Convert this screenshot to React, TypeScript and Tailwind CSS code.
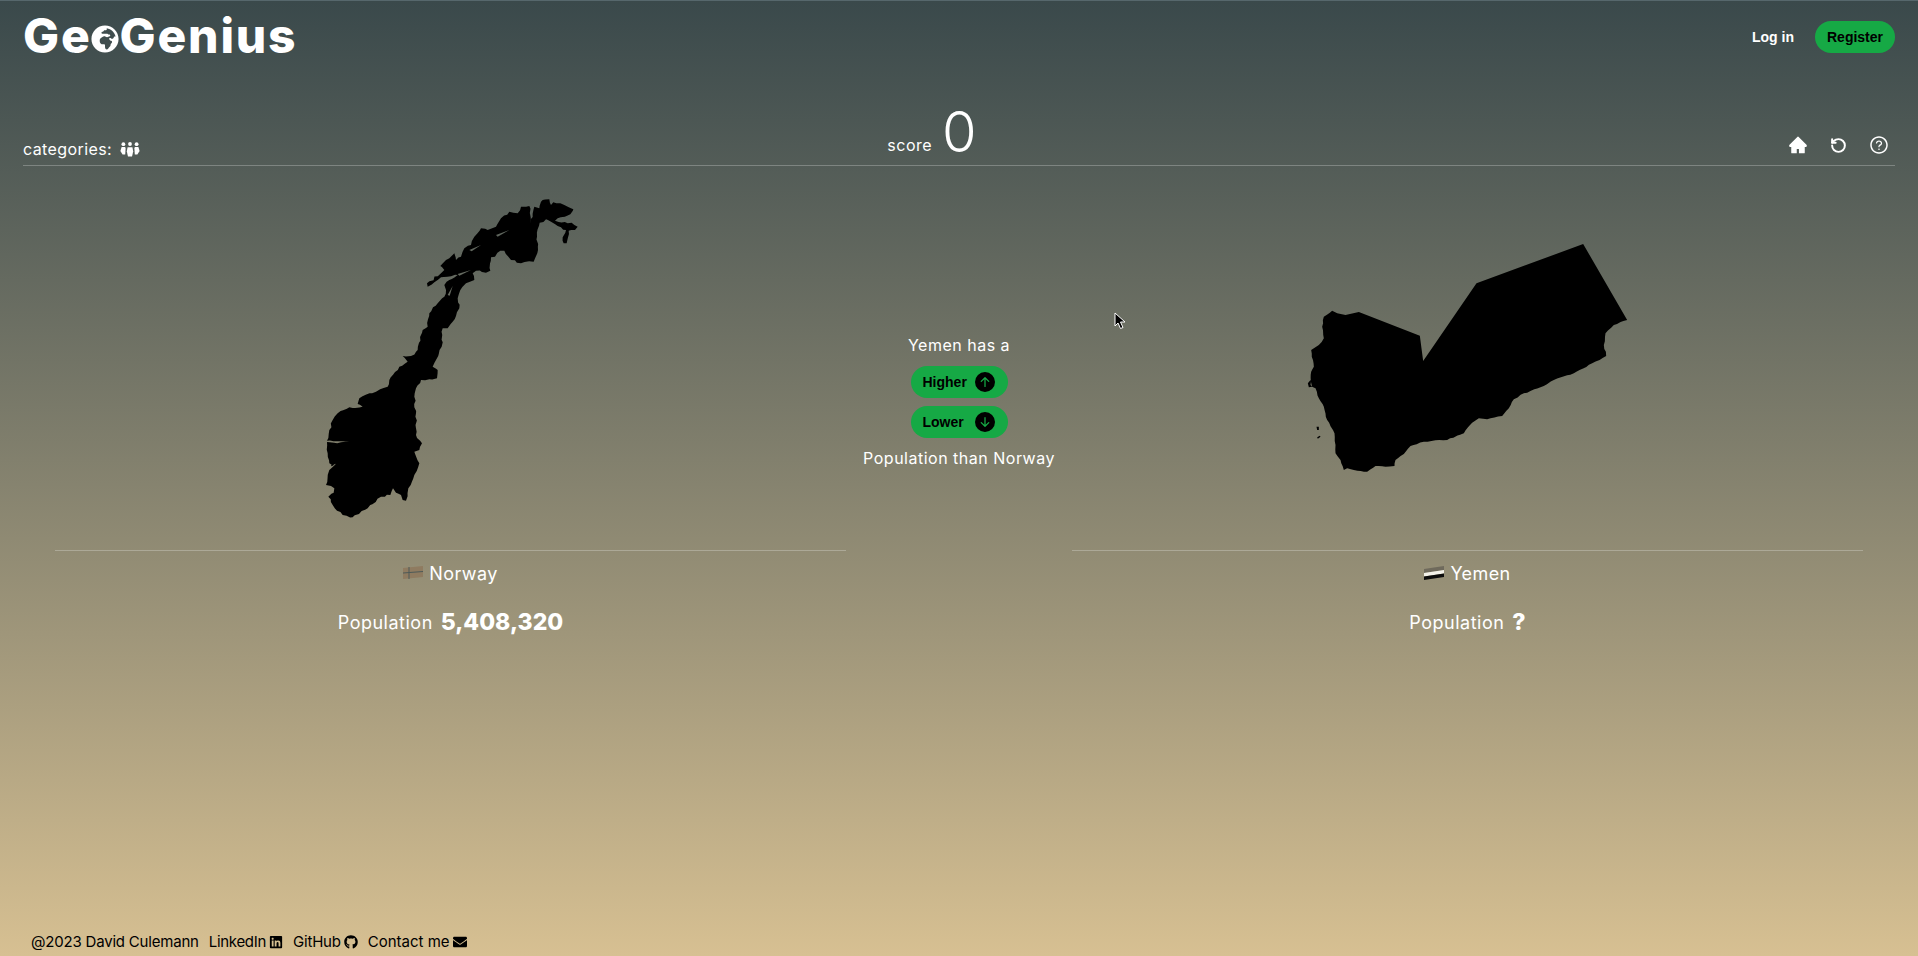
import { BsArrowDownCircleFill, BsArrowUpCircleFill } from "react-icons/bs";
import { AiFillHome, AiOutlineQuestionCircle } from "react-icons/ai";
import { FaEnvelope, FaGithub, FaGlobeAfrica, FaLinkedin } from "react-icons/fa";
import { RotateCcw } from "lucide-react";

// adds small noise along a line so it reads as a coastline
function roughen(points: number[][], amp: number) {
  let out = "";
  let n = 0;
  for (let i = 0; i < points.length - 1; i++) {
    const [x1, y1] = points[i];
    const [x2, y2] = points[i + 1];
    const steps = Math.max(1, Math.round(Math.hypot(x2 - x1, y2 - y1) / 11));
    for (let s = 0; s < steps; s++) {
      const t = s / steps;
      const a = Math.sin(++n * 12.9898) * 43758.5453;
      const b = Math.sin(n * 78.233) * 24634.6345;
      const dx = s === 0 ? 0 : (a - Math.floor(a) - 0.5) * 2 * amp;
      const dy = s === 0 ? 0 : (b - Math.floor(b) - 0.5) * 2 * amp;
      out += `L${(x1 + (x2 - x1) * t + dx).toFixed(1)},${(y1 + (y2 - y1) * t + dy).toFixed(1)} `;
    }
  }
  return out;
}

const NORWAY_COAST = [
  [725, 60], [745, 58], [750, 75], [757, 67], [790, 75], [817, 88], [808, 103], [770, 115], [762, 122], [800, 130], [812, 128], [830, 140], [822, 150], [803, 152], [797, 190], [788, 190], [785, 172], [795, 150], [770, 138], [750, 125], [735, 118], [716, 128], [708, 170], [711, 210], [698, 245], [660, 250], [630, 240], [610, 212], [598, 212], [582, 230], [570, 232], [568, 272], [555, 278], [525, 272], [515, 280], [520, 300], [495, 310], [478, 330], [470, 355], [475, 385], [455, 425], [440, 445], [425, 445], [422, 500], [405, 540], [395, 560], [410, 570], [408, 595], [385, 598], [360, 600], [345, 625], [340, 650], [345, 700], [345, 765], [363, 790], [355, 810], [340, 815], [355, 850], [340, 885], [322, 925], [315, 962], [305, 960], [300, 945], [285, 938], [276, 925], [268, 945], [240, 950], [200, 985], [155, 1012], [125, 1005], [95, 975], [82, 950], [98, 938], [100, 925], [90, 918], [75, 915], [85, 870], [104, 853], [85, 850], [80, 820], [78, 786], [120, 787], [145, 786], [120, 784], [78, 782], [85, 750], [95, 720], [110, 700], [145, 682], [185, 680], [170, 672], [175, 655], [225, 635], [260, 620], [265, 600], [295, 560], [320, 545], [305, 528], [330, 528], [345, 515], [350, 510], [365, 450], [380, 440], [385, 400], [410, 370], [430, 350], [435, 330], [430, 315], [445, 300], [470, 285], [420, 292], [380, 320], [378, 310], [420, 280], [430, 270], [418, 258], [435, 240], [445, 235], [460, 220], [465, 240], [480, 230], [490, 205], [510, 195], [520, 170], [540, 145], [560, 150], [585, 140], [600, 115], [625, 95], [650, 100], [660, 80], [685, 78], [688, 130], [700, 80], [715, 85], [720, 65], [725, 60],
];

// small inlets inside the northern part, cut out by evenodd
const NORWAY_INLETS =
  "M505,210 L540,195 L512,214 Z M470,282 L510,270 L475,287 Z M440,345 L455,318 L446,347 Z M585,165 L625,150 L590,170 Z M90,855 L105,851 L92,859 Z";

const NORWAY = "M" + roughen(NORWAY_COAST, 3).slice(1) + "Z " + NORWAY_INLETS;

const YEMEN_COAST = [
  [1010, 270], [970, 285], [945, 310], [940, 345], [947, 378], [905, 400], [850, 430], [790, 450], [750, 472], [700, 490], [670, 508], [655, 535], [635, 558], [590, 568], [565, 565], [545, 578], [520, 610], [470, 630], [400, 635], [360, 648], [340, 672], [315, 690], [312, 708], [285, 710], [255, 708], [230, 725], [190, 720], [170, 715], [160, 720], [150, 690], [135, 670], [132, 610], [110, 570], [100, 530], [85, 505], [75, 475], [60, 465], [62, 425], [70, 410], [62, 360], [85, 345], [100, 325], [95, 290], [100, 260], [125, 242],
];

const YEMEN =
  "M125,242 L140,250 L165,255 L205,246 L388,317 L398,393 L558,160 L878,42 " +
  roughen(YEMEN_COAST, 1.5) +
  "Z M52,460 L60,450 L65,470 L55,472 Z M78,590 L85,590 L85,600 L80,600 Z M80,622 L88,617 L90,620 L82,626 Z";

function CountryShape({ d, viewBox }: { d: string; viewBox: string }) {
  return (
    <svg viewBox={viewBox} className="h-[350px] w-[350px]">
      <path d={d} fill="#000" fillRule="evenodd" />
    </svg>
  );
}

function PeopleIcon() {
  return (
    <svg viewBox="0 0 20 15" className="h-[15px] w-[20px]" fill="currentColor">
      <circle cx="3.4" cy="2.2" r="1.9" />
      <circle cx="10" cy="2" r="1.9" />
      <circle cx="16.6" cy="2.2" r="1.9" />
      <path d="M1.6,5 L5.2,5 L5.6,6.5 L5.2,12.5 L2.6,12.5 L0.4,9 Z" />
      <path d="M14.8,5 L18.4,5 L19.6,9 L17.4,12.5 L14.8,12.5 L14.4,6.5 Z" />
      <path d="M7.6,5.2 L12.4,5.2 L13.2,9.5 L12,14.6 L8,14.6 L6.8,9.5 Z" />
    </svg>
  );
}

function NorwayFlag() {
  return (
    <svg viewBox="0 0 20 14" className="h-[14px] w-[20px]">
      <path d="M0,2 L20,0 L20,11 L0,13 Z" fill="#8f7b60" />
      <path d="M0,7 L20,5.5 M6,1 L6,13" stroke="#4d5a58" strokeWidth="1" />
    </svg>
  );
}

function YemenFlag() {
  return (
    <svg viewBox="0 0 20 14" className="h-[14px] w-[20px]">
      <path d="M0,3 L20,0 L20,4 L0,7 Z" fill="#6f6a5c" />
      <path d="M0,7 L20,4 L20,7.5 L0,10.5 Z" fill="#f4f2ea" />
      <path d="M0,10.5 L20,7.5 L20,11 L0,14 Z" fill="#0c0c0c" />
    </svg>
  );
}

function CountryColumn({
  shape,
  flag,
  name,
  value,
}: {
  shape: React.ReactNode;
  flag: React.ReactNode;
  name: string;
  value: string;
}) {
  return (
    <div className="flex w-[791px] flex-col items-center">
      {shape}
      <div className="mt-5 w-full border-t border-white/25" />
      <div className="mt-[10px] flex h-[24px] items-center gap-[6px] text-[18px] tracking-[0.4px]">
        {flag}
        <span>{name}</span>
      </div>
      <div className="mt-[22px] flex h-[30px] items-center gap-[8px]">
        <span className="text-[18px] tracking-[0.5px]">Population</span>
        <span className="text-[23px] font-extrabold">{value}</span>
      </div>
    </div>
  );
}

export default function App() {
  return (
    <div className="relative flex h-[956px] flex-col overflow-hidden border-t border-[#56676c] bg-gradient-to-b from-[#3a494b] to-[#d7c092] font-['Inter',sans-serif] text-white">
      <header className="flex items-start justify-between px-[23px] pt-[20px]">
        <div className="flex h-[30px] items-center text-[48px] leading-none font-extrabold tracking-[1.8px]">
          <span>Ge</span>
          <FaGlobeAfrica className="mt-[5px] mr-[1px] -ml-[1px] h-[28px] w-[28px]" />
          <span>Genius</span>
        </div>
        <div className="flex items-center gap-[21px] font-['Liberation_Sans',sans-serif] text-[14px] font-bold">
          <button>Log in</button>
          <button className="h-[32px] w-[80px] rounded-full bg-[#16a945] text-black">Register</button>
        </div>
      </header>

      <div className="mx-[23px] mt-[34px] grid h-[79px] grid-cols-3 items-end border-b border-white/25 pb-[2px]">
        <div className="mb-[2px] flex items-center gap-[8px] text-[16px] tracking-[0.4px]">
          categories:
          <PeopleIcon />
        </div>
        <div className="flex items-end justify-center gap-[10px] pr-[54px]">
          <span className="mb-[6px] text-[16px] tracking-[0.5px]">score</span>
          <span className="text-[56px] leading-[62px] font-light">0</span>
        </div>
        <div className="mb-[8px] flex items-center justify-end gap-[22px] pr-[6px]">
          <AiFillHome className="h-[20px] w-[20px]" />
          <RotateCcw className="h-[17px] w-[17px]" strokeWidth={2.8} />
          <AiOutlineQuestionCircle className="h-[20px] w-[20px]" />
        </div>
      </div>

      <main className="mt-[14px] flex px-[55px]">
        <CountryColumn
          shape={<CountryShape d={NORWAY} viewBox="-75 0 1050 1050" />}
          flag={<NorwayFlag />}
          name="Norway"
          value="5,408,320"
        />
        <div className="flex w-[226px] flex-col items-center pt-[153px] text-[16px] tracking-[0.5px]">
          <p className="leading-6">Yemen has a</p>
          <button className="mt-[9px] flex h-[32px] w-[97px] items-center justify-between rounded-full bg-[#16a945] pr-[13px] pl-[12px] font-['Liberation_Sans',sans-serif] text-[14px] font-bold tracking-normal text-black">
            Higher
            <BsArrowUpCircleFill className="h-[20px] w-[20px]" />
          </button>
          <button className="mt-2 flex h-[32px] w-[97px] items-center justify-between rounded-full bg-[#16a945] pr-[13px] pl-[12px] font-['Liberation_Sans',sans-serif] text-[14px] font-bold tracking-normal text-black">
            Lower
            <BsArrowDownCircleFill className="h-[20px] w-[20px]" />
          </button>
          <p className="mt-[8px] leading-6 whitespace-nowrap">Population than Norway</p>
        </div>
        <CountryColumn
          shape={<CountryShape d={YEMEN} viewBox="7.5 -150 1050 1050" />}
          flag={<YemenFlag />}
          name="Yemen"
          value="?"
        />
      </main>

      <footer className="mt-auto mb-[2px] flex h-[24px] items-center gap-[10px] pl-[31px] text-[15px] text-black">
        <span className="tracking-[-0.2px]">@2023 David Culemann</span>
        <span className="flex items-center gap-[3px] tracking-[-0.3px]">
          LinkedIn <FaLinkedin className="h-[14px] w-[14px]" />
        </span>
        <span className="flex items-center gap-[3px] tracking-[-0.2px]">
          GitHub <FaGithub className="h-[14px] w-[14px]" />
        </span>
        <span className="flex items-center gap-[3px]">
          Contact me <FaEnvelope className="h-[14px] w-[14px]" />
        </span>
      </footer>

      {/* mouse pointer caught in the screenshot */}
      <svg viewBox="0 0 14 18" className="absolute top-[311px] left-[1114px] h-[18px] w-[14px]">
        <path d="M1,1 L1,14 L4,11 L6.5,16.5 L9,15.5 L6.5,10 L11,10 Z" fill="#000" stroke="#fff" strokeWidth="1" />
      </svg>
    </div>
  );
}
